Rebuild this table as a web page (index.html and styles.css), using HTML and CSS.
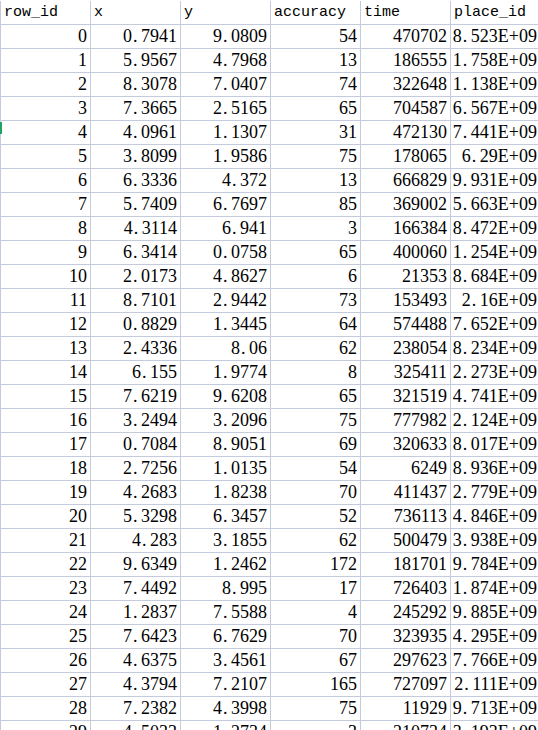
FILE: index.html
```html
<!DOCTYPE html>
<html>
<head>
<meta charset="utf-8">
<link rel="stylesheet" href="styles.css">
</head>
<body>
<div class="sheet">
<table class="grid">
<thead>
<tr><th>row_id</th><th>x</th><th>y</th><th>accuracy</th><th>time</th><th>place_id</th></tr>
</thead>
<tbody>
<tr><td>0</td><td>0<span class="dp">.</span>7941</td><td>9<span class="dp">.</span>0809</td><td>54</td><td>470702</td><td>8<span class="dp">.</span>523E+09</td></tr>
<tr><td>1</td><td>5<span class="dp">.</span>9567</td><td>4<span class="dp">.</span>7968</td><td>13</td><td>186555</td><td>1<span class="dp">.</span>758E+09</td></tr>
<tr><td>2</td><td>8<span class="dp">.</span>3078</td><td>7<span class="dp">.</span>0407</td><td>74</td><td>322648</td><td>1<span class="dp">.</span>138E+09</td></tr>
<tr><td>3</td><td>7<span class="dp">.</span>3665</td><td>2<span class="dp">.</span>5165</td><td>65</td><td>704587</td><td>6<span class="dp">.</span>567E+09</td></tr>
<tr class="active"><td class="mark">4</td><td>4<span class="dp">.</span>0961</td><td>1<span class="dp">.</span>1307</td><td>31</td><td>472130</td><td>7<span class="dp">.</span>441E+09</td></tr>
<tr><td>5</td><td>3<span class="dp">.</span>8099</td><td>1<span class="dp">.</span>9586</td><td>75</td><td>178065</td><td>6<span class="dp">.</span>29E+09</td></tr>
<tr><td>6</td><td>6<span class="dp">.</span>3336</td><td>4<span class="dp">.</span>372</td><td>13</td><td>666829</td><td>9<span class="dp">.</span>931E+09</td></tr>
<tr><td>7</td><td>5<span class="dp">.</span>7409</td><td>6<span class="dp">.</span>7697</td><td>85</td><td>369002</td><td>5<span class="dp">.</span>663E+09</td></tr>
<tr><td>8</td><td>4<span class="dp">.</span>3114</td><td>6<span class="dp">.</span>941</td><td>3</td><td>166384</td><td>8<span class="dp">.</span>472E+09</td></tr>
<tr><td>9</td><td>6<span class="dp">.</span>3414</td><td>0<span class="dp">.</span>0758</td><td>65</td><td>400060</td><td>1<span class="dp">.</span>254E+09</td></tr>
<tr><td>10</td><td>2<span class="dp">.</span>0173</td><td>4<span class="dp">.</span>8627</td><td>6</td><td>21353</td><td>8<span class="dp">.</span>684E+09</td></tr>
<tr><td>11</td><td>8<span class="dp">.</span>7101</td><td>2<span class="dp">.</span>9442</td><td>73</td><td>153493</td><td>2<span class="dp">.</span>16E+09</td></tr>
<tr><td>12</td><td>0<span class="dp">.</span>8829</td><td>1<span class="dp">.</span>3445</td><td>64</td><td>574488</td><td>7<span class="dp">.</span>652E+09</td></tr>
<tr><td>13</td><td>2<span class="dp">.</span>4336</td><td>8<span class="dp">.</span>06</td><td>62</td><td>238054</td><td>8<span class="dp">.</span>234E+09</td></tr>
<tr><td>14</td><td>6<span class="dp">.</span>155</td><td>1<span class="dp">.</span>9774</td><td>8</td><td>325411</td><td>2<span class="dp">.</span>273E+09</td></tr>
<tr><td>15</td><td>7<span class="dp">.</span>6219</td><td>9<span class="dp">.</span>6208</td><td>65</td><td>321519</td><td>4<span class="dp">.</span>741E+09</td></tr>
<tr><td>16</td><td>3<span class="dp">.</span>2494</td><td>3<span class="dp">.</span>2096</td><td>75</td><td>777982</td><td>2<span class="dp">.</span>124E+09</td></tr>
<tr><td>17</td><td>0<span class="dp">.</span>7084</td><td>8<span class="dp">.</span>9051</td><td>69</td><td>320633</td><td>8<span class="dp">.</span>017E+09</td></tr>
<tr><td>18</td><td>2<span class="dp">.</span>7256</td><td>1<span class="dp">.</span>0135</td><td>54</td><td>6249</td><td>8<span class="dp">.</span>936E+09</td></tr>
<tr><td>19</td><td>4<span class="dp">.</span>2683</td><td>1<span class="dp">.</span>8238</td><td>70</td><td>411437</td><td>2<span class="dp">.</span>779E+09</td></tr>
<tr><td>20</td><td>5<span class="dp">.</span>3298</td><td>6<span class="dp">.</span>3457</td><td>52</td><td>736113</td><td>4<span class="dp">.</span>846E+09</td></tr>
<tr><td>21</td><td>4<span class="dp">.</span>283</td><td>3<span class="dp">.</span>1855</td><td>62</td><td>500479</td><td>3<span class="dp">.</span>938E+09</td></tr>
<tr><td>22</td><td>9<span class="dp">.</span>6349</td><td>1<span class="dp">.</span>2462</td><td>172</td><td>181701</td><td>9<span class="dp">.</span>784E+09</td></tr>
<tr><td>23</td><td>7<span class="dp">.</span>4492</td><td>8<span class="dp">.</span>995</td><td>17</td><td>726403</td><td>1<span class="dp">.</span>874E+09</td></tr>
<tr><td>24</td><td>1<span class="dp">.</span>2837</td><td>7<span class="dp">.</span>5588</td><td>4</td><td>245292</td><td>9<span class="dp">.</span>885E+09</td></tr>
<tr><td>25</td><td>7<span class="dp">.</span>6423</td><td>6<span class="dp">.</span>7629</td><td>70</td><td>323935</td><td>4<span class="dp">.</span>295E+09</td></tr>
<tr><td>26</td><td>4<span class="dp">.</span>6375</td><td>3<span class="dp">.</span>4561</td><td>67</td><td>297623</td><td>7<span class="dp">.</span>766E+09</td></tr>
<tr><td>27</td><td>4<span class="dp">.</span>3794</td><td>7<span class="dp">.</span>2107</td><td>165</td><td>727097</td><td>2<span class="dp">.</span>111E+09</td></tr>
<tr><td>28</td><td>7<span class="dp">.</span>2382</td><td>4<span class="dp">.</span>3998</td><td>75</td><td>11929</td><td>9<span class="dp">.</span>713E+09</td></tr>
<tr><td>29</td><td>4<span class="dp">.</span>5033</td><td>1<span class="dp">.</span>2734</td><td>3</td><td>210734</td><td>3<span class="dp">.</span>193E+09</td></tr>
</tbody>
</table>
</div>
</body>
</html>
```
FILE: styles.css
```css
html, body {
  margin: 0;
  padding: 0;
  background: #ffffff;
  overflow: hidden;
}

.sheet {
  width: 540px;
  padding-top: 1px;
}

.grid {
  width: 540px;
  table-layout: fixed;
  border-collapse: separate;
  border-spacing: 0;
  color: #000000;
}

.grid th,
.grid td {
  box-sizing: border-box;
  width: 90px;
  height: 24px;
  border-left: 1px solid #c3cbdd;
  border-bottom: 1px solid #c3cbdd;
  white-space: nowrap;
  overflow: visible;
  vertical-align: middle;
}

.grid th {
  font-family: "Liberation Mono", monospace;
  font-size: 15px;
  font-weight: normal;
  text-align: left;
  padding: 0 0 0 3px;
  line-height: 22px;
}

.grid td {
  font-family: "Liberation Serif", serif;
  font-size: 18px;
  text-align: right;
  padding: 0 3px 0 0;
  line-height: 23px;
}

.dp {
  display: inline-block;
  width: 9px;
  text-align: left;
  padding-left: 1px;
  box-sizing: border-box;
}

.mark {
  position: relative;
}

.mark::before {
  content: "";
  position: absolute;
  left: -1px;
  top: 1px;
  width: 2px;
  height: 12px;
  background: #21a366;
}
```
